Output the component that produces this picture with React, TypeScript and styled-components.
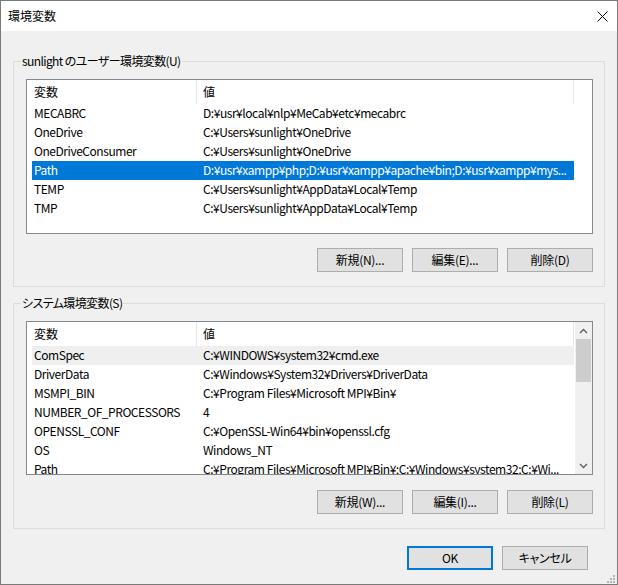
import React from "react";
import styled, { createGlobalStyle } from "styled-components";

const Global = createGlobalStyle`
  html, body { margin: 0; padding: 0; background: #ffffff; }
  body {
    font-family: "Noto Sans CJK JP", "Noto Sans", sans-serif;
    font-size: 12px;
    color: #000;
    font-feature-settings: "palt";
  }
  * { box-sizing: border-box; }
`;

const Window = styled.div`
  position: relative;
  width: 618px;
  height: 585px;
  border: 1px solid #7a7a7a;
  background: #f0f0f0;
  display: flex;
  flex-direction: column;
`;

const TitleBar = styled.div`
  height: 30px;
  flex: none;
  background: #ffffff;
  display: flex;
  align-items: center;
  justify-content: space-between;
  padding: 0 9px 0 7px;
`;

const Title = styled.span`
  font-size: 12px;
  line-height: 16px;
  font-feature-settings: normal;
`;

const CloseBox = styled.div`
  width: 11px;
  height: 11px;
  display: flex;
  margin-top: 1px;
`;

const Body = styled.div`
  display: flex;
  flex-direction: column;
  padding: 30px 12px 0 12px;
`;

const GroupBox = styled.div<{ $mt?: number }>`
  border: 1px solid #dcdcdc;
  display: flex;
  flex-direction: column;
  padding: 0 11px 14px 12px;
  margin-top: ${(p) => p.$mt ?? 0}px;
`;

const Legend = styled.div`
  align-self: flex-start;
  margin: -9px 0 0 -5px;
  padding: 0 1px;
  height: 16px;
  line-height: 16px;
  background: #f0f0f0;
  white-space: nowrap;
  letter-spacing: -0.6px;
`;

const ListView = styled.div<{ $h: number }>`
  margin-top: 10px;
  height: ${(p) => p.$h}px;
  border: 1px solid #828790;
  background: #ffffff;
  display: flex;
  overflow: hidden;
`;

const ListContent = styled.div`
  flex: 1;
  min-width: 0;
  display: flex;
  flex-direction: column;
  overflow: hidden;
`;

const HeaderRow = styled.div`
  height: 24px;
  flex: none;
  display: grid;
  grid-template-columns: 170px 377px 1fr;
`;

const HeaderCell = styled.div<{ $pl: number; $sep?: boolean }>`
  line-height: 24px;
  padding-left: ${(p) => p.$pl}px;
  border-right: ${(p) => (p.$sep ? "1px solid #e5e5e5" : "none")};
  white-space: nowrap;
`;

const Row = styled.div<{ $state?: "selected" | "hover" }>`
  flex: none;
  height: 19px;
  width: 542px;
  margin-left: 5px;
  display: grid;
  grid-template-columns: 164px 1fr;
  background: ${(p) =>
    p.$state === "selected" ? "#0078d7" : p.$state === "hover" ? "#efefef" : "transparent"};
  color: ${(p) => (p.$state === "selected" ? "#ffffff" : "#000000")};
`;

const Cell = styled.div<{ $pl: number }>`
  line-height: 18px;
  padding-left: ${(p) => p.$pl}px;
  white-space: nowrap;
  overflow: hidden;
  letter-spacing: -0.45px;
`;

const ScrollBar = styled.div`
  width: 17px;
  flex: none;
  background: #f0f0f0;
  display: flex;
  flex-direction: column;
`;

const ScrollArrow = styled.div`
  height: 17px;
  flex: none;
  display: flex;
  align-items: center;
  justify-content: center;
`;

const ScrollThumb = styled.div`
  height: 43px;
  margin: 0 1px;
  background: #cdcdcd;
  flex: none;
`;

const ScrollTrack = styled.div`
  flex: 1;
`;

const ButtonRow = styled.div<{ $mt: number; $mr?: number }>`
  display: flex;
  justify-content: flex-end;
  gap: 9px;
  margin-top: ${(p) => p.$mt}px;
  margin-right: ${(p) => p.$mr ?? 0}px;
`;

const Button = styled.button<{ $default?: boolean }>`
  width: 86px;
  height: 24px;
  padding: 0;
  margin: 0;
  font-family: "Noto Sans CJK JP", "Noto Sans", sans-serif;
  font-size: 12px;
  font-feature-settings: "palt";
  letter-spacing: -0.3px;
  color: #000;
  background: #e1e1e1;
  border: ${(p) => (p.$default ? "2px solid #0078d7" : "1px solid #adadad")};
  border-radius: 0;
  line-height: 16px;
`;

const Grip = styled.div`
  position: absolute;
  right: 2px;
  bottom: 1px;
  width: 8px;
  height: 8px;
  display: flex;
`;

type Item = { name: string; value: string; state?: "selected" | "hover" };

const userVars: Item[] = [
  { name: "MECABRC", value: "D:¥usr¥local¥nlp¥MeCab¥etc¥mecabrc" },
  { name: "OneDrive", value: "C:¥Users¥sunlight¥OneDrive" },
  { name: "OneDriveConsumer", value: "C:¥Users¥sunlight¥OneDrive" },
  {
    name: "Path",
    value: "D:¥usr¥xampp¥php;D:¥usr¥xampp¥apache¥bin;D:¥usr¥xampp¥mys...",
    state: "selected",
  },
  { name: "TEMP", value: "C:¥Users¥sunlight¥AppData¥Local¥Temp" },
  { name: "TMP", value: "C:¥Users¥sunlight¥AppData¥Local¥Temp" },
];

const sysVars: Item[] = [
  { name: "ComSpec", value: "C:¥WINDOWS¥system32¥cmd.exe", state: "hover" },
  { name: "DriverData", value: "C:¥Windows¥System32¥Drivers¥DriverData" },
  { name: "MSMPI_BIN", value: "C:¥Program Files¥Microsoft MPI¥Bin¥" },
  { name: "NUMBER_OF_PROCESSORS", value: "4" },
  { name: "OPENSSL_CONF", value: "C:¥OpenSSL-Win64¥bin¥openssl.cfg" },
  { name: "OS", value: "Windows_NT" },
  {
    name: "Path",
    value: "C:¥Program Files¥Microsoft MPI¥Bin¥;C:¥Windows¥system32;C:¥Wi...",
  },
];

const Chevron = ({ up }: { up?: boolean }) => (
  <svg width="9" height="6" viewBox="0 0 9 6">
    <path
      d={up ? "M1 5 L4.5 1.5 L8 5" : "M1 1 L4.5 4.5 L8 1"}
      fill="none"
      stroke="#606060"
      strokeWidth="1.4"
    />
  </svg>
);

const VarList = ({ items, h, scroll }: { items: Item[]; h: number; scroll?: boolean }) => (
  <ListView $h={h}>
    <ListContent>
      <HeaderRow>
        <HeaderCell $pl={7} $sep>
          変数
        </HeaderCell>
        <HeaderCell $pl={6} $sep>
          値
        </HeaderCell>
        <HeaderCell $pl={0} />
      </HeaderRow>
      {items.map((it, i) => (
        <Row key={i} $state={it.state}>
          <Cell $pl={2}>{it.name}</Cell>
          <Cell $pl={7}>{it.value}</Cell>
        </Row>
      ))}
    </ListContent>
    {scroll && (
      <ScrollBar>
        <ScrollArrow>
          <Chevron up />
        </ScrollArrow>
        <ScrollThumb />
        <ScrollTrack />
        <ScrollArrow>
          <Chevron />
        </ScrollArrow>
      </ScrollBar>
    )}
  </ListView>
);

export default function App() {
  return (
    <>
      <Global />
      <Window>
        <TitleBar>
          <Title>環境変数</Title>
          <CloseBox>
            <svg width="11" height="11" viewBox="0 0 11 11">
              <path d="M0.5 0.5 L10.5 10.5 M10.5 0.5 L0.5 10.5" stroke="#000" strokeWidth="1" />
            </svg>
          </CloseBox>
        </TitleBar>
        <Body>
          <GroupBox>
            <Legend>sunlight のユーザー環境変数(U)</Legend>
            <VarList items={userVars} h={155} />
            <ButtonRow $mt={14}>
              <Button>新規(N)...</Button>
              <Button>編集(E)...</Button>
              <Button>削除(D)</Button>
            </ButtonRow>
          </GroupBox>
          <GroupBox $mt={16}>
            <Legend>システム環境変数(S)</Legend>
            <VarList items={sysVars} h={154} scroll />
            <ButtonRow $mt={15}>
              <Button>新規(W)...</Button>
              <Button>編集(I)...</Button>
              <Button>削除(L)</Button>
            </ButtonRow>
          </GroupBox>
          <ButtonRow $mt={17} $mr={17}>
            <Button $default>OK</Button>
            <Button>キャンセル</Button>
          </ButtonRow>
        </Body>
        <Grip>
          <svg width="8" height="8" viewBox="0 0 8 8">
            <rect x="6" y="0" width="2" height="2" fill="#b4b4b4" />
            <rect x="3" y="3" width="2" height="2" fill="#b4b4b4" />
            <rect x="6" y="3" width="2" height="2" fill="#b4b4b4" />
            <rect x="0" y="6" width="2" height="2" fill="#b4b4b4" />
            <rect x="3" y="6" width="2" height="2" fill="#b4b4b4" />
            <rect x="6" y="6" width="2" height="2" fill="#b4b4b4" />
          </svg>
        </Grip>
      </Window>
    </>
  );
}
